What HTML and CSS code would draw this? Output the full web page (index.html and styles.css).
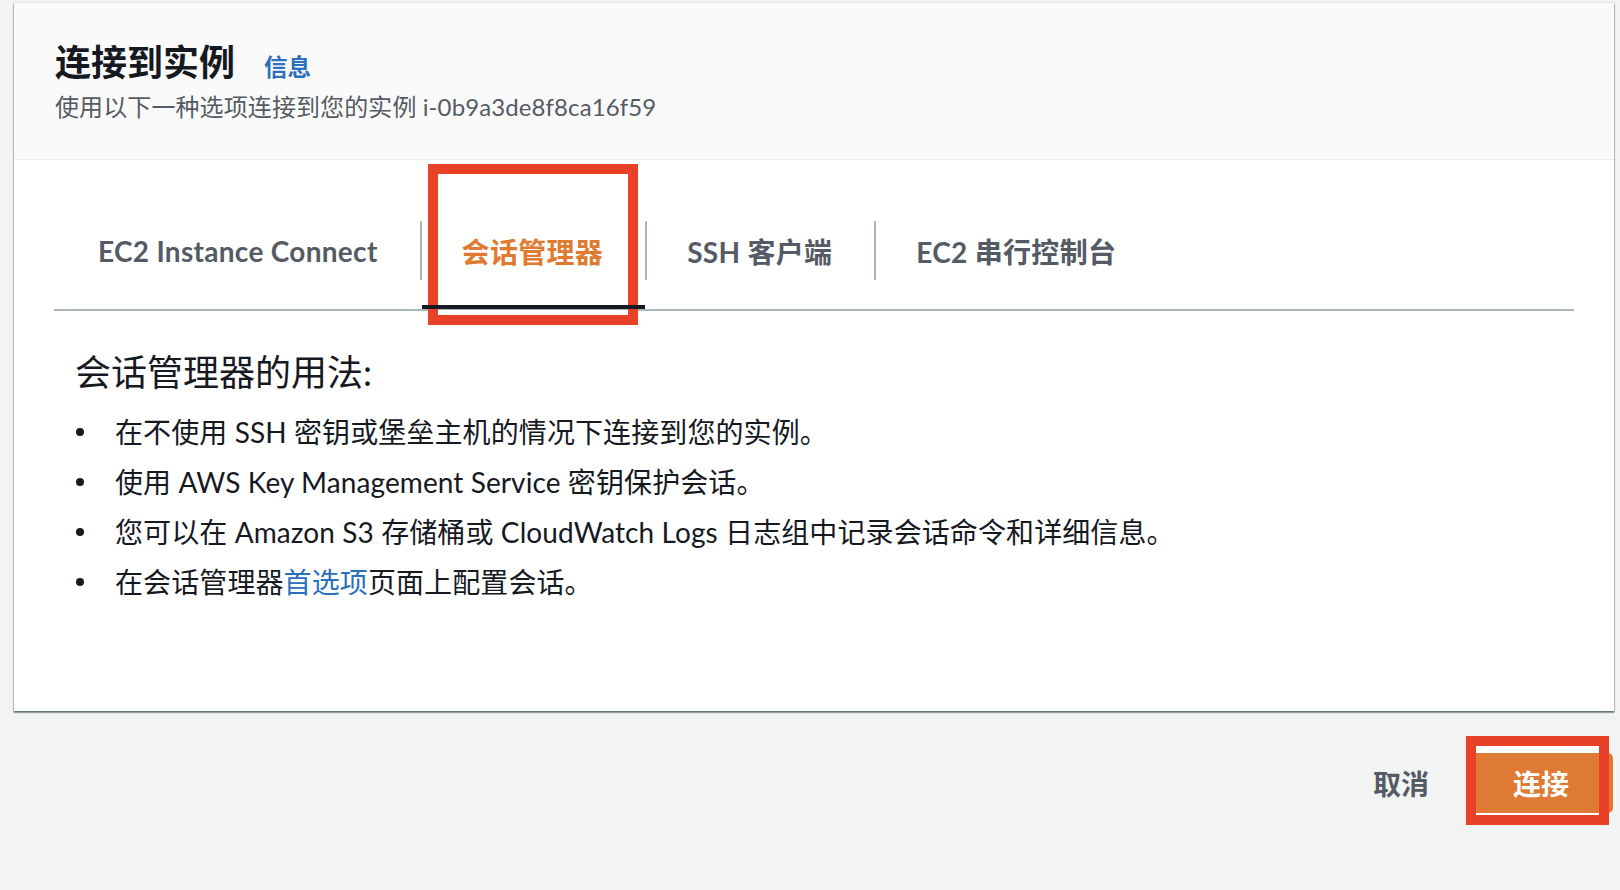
FILE: index.html
```html
<!DOCTYPE html>
<html lang="zh-CN">
<head>
<meta charset="utf-8">
<title>连接到实例</title>
<link rel="stylesheet" href="styles.css">
</head>
<body>
<div class="modal">
  <div class="modal-header">
    <h2 class="title"><span class="title-text">连接到实例</span><a class="info" href="#">信息</a></h2>
    <p class="subtitle">使用以下一种选项连接到您的实例 i-0b9a3de8f8ca16f59</p>
  </div>
  <div class="modal-body">
    <div class="tabs">
      <div class="tab">EC2 Instance Connect</div>
      <div class="tab active">会话管理器<span class="mark mark-tab"></span></div>
      <div class="tab">SSH 客户端</div>
      <div class="tab">EC2 串行控制台</div>
    </div>
    <div class="content">
      <h3 class="usage-title">会话管理器的用法:</h3>
      <ul class="usage-list">
        <li><span>在不使用 SSH 密钥或堡垒主机的情况下连接到您的实例。</span></li>
        <li><span>使用 AWS Key Management Service 密钥保护会话。</span></li>
        <li><span>您可以在 Amazon S3 存储桶或 CloudWatch Logs 日志组中记录会话命令和详细信息。</span></li>
        <li><span>在会话管理器<a class="link" href="#">首选项</a>页面上配置会话。</span></li>
      </ul>
    </div>
  </div>
</div>
<div class="footer">
  <button class="btn btn-cancel">取消</button>
  <button class="btn btn-primary">连接<span class="mark mark-btn"></span></button>
</div>
</body>
</html>
```

FILE: styles.css
```css
* {
  box-sizing: border-box;
}

html, body {
  margin: 0;
  padding: 0;
}

body {
  background: #f2f3f3;
  font-family: "Lato", "Noto Sans CJK SC", sans-serif;
  color: #16191f;
  width: 1620px;
  height: 890px;
  overflow: hidden;
}

.modal {
  margin: 3px 0 0 14px;
  width: 1600px;
  background: #ffffff;
  box-shadow: 0 2px 1px 0 rgba(0, 28, 36, 0.35),
              1px 1px 1px 0 rgba(0, 28, 36, 0.2),
              -1px 1px 1px 0 rgba(0, 28, 36, 0.2),
              0 -1px 1px 0 rgba(0, 28, 36, 0.06);
}

.modal-header {
  height: 157px;
  background: #fafafa;
  border-bottom: 1px solid #eaeded;
  padding: 37px 41px 0;
}

.title {
  display: flex;
  align-items: baseline;
  height: 44px;
  margin: 0;
  font-size: 36px;
  line-height: 44px;
  font-weight: 700;
  color: #16191f;
}

.info {
  margin-left: 29px;
  font-size: 23.5px;
  line-height: 30px;
  font-weight: 700;
  color: #2a70bc;
  text-decoration: none;
}

.subtitle {
  margin: 7px 0 0;
  font-size: 24px;
  line-height: 32px;
  letter-spacing: 0.1px;
  color: #545b64;
}

.tabs {
  display: flex;
  margin: 37px 40px 0;
  border-bottom: 2px solid #aab7b8;
}

.tab {
  position: relative;
  display: flex;
  align-items: center;
  height: 112px;
  padding: 0 42px 4px;
  font-size: 28px;
  font-weight: 700;
  letter-spacing: 0.3px;
  color: #545b64;
  white-space: nowrap;
}

.tab:first-child {
  padding-left: 44px;
}

.tab + .tab::before {
  content: "";
  position: absolute;
  left: 0;
  top: 24px;
  width: 2px;
  height: 59px;
  background: #aab7b8;
}

.tab.active {
  color: #e07a30;
}

.tab.active::after {
  content: "";
  position: absolute;
  left: 2px;
  right: 0;
  bottom: 0;
  height: 4px;
  background: #16191f;
}

.mark {
  position: absolute;
  border: 10px solid #e84128;
  pointer-events: none;
}

.mark-tab {
  left: 8px;
  top: -33px;
  width: 210px;
  height: 161px;
  box-shadow: inset 0 -5px 0 #ffffff;
}

.content {
  padding: 37px 0 104px 61px;
}

.usage-title {
  margin: 0;
  font-size: 36px;
  line-height: 48px;
  font-weight: 400;
  color: #16191f;
}

.usage-list {
  list-style: none;
  margin: 11px 0 0;
  padding: 0;
}

.usage-list li {
  display: flex;
  align-items: center;
  font-size: 28px;
  line-height: 50px;
  letter-spacing: 0.1px;
  color: #16191f;
}

.usage-list li::before {
  content: "";
  flex-shrink: 0;
  width: 8px;
  height: 8px;
  border-radius: 50%;
  background: #16191f;
  margin: 0 31px 0 1px;
}

.link {
  color: #2a70bc;
  text-decoration: none;
}

.footer {
  display: flex;
  justify-content: flex-end;
  margin: 42px 0 0 14px;
  width: 1599px;
}

.btn {
  height: 60px;
  border: none;
  font-family: "Lato", "Noto Sans CJK SC", sans-serif;
  font-size: 28px;
  font-weight: 700;
  cursor: pointer;
}

.btn-cancel {
  padding: 0 40px;
  background: transparent;
  color: #545b64;
}

.btn-primary {
  position: relative;
  padding: 0 44px;
  background: #de7a33;
  color: #ffffff;
  border-radius: 5px;
}

.mark-btn {
  left: -3px;
  top: -17px;
  width: 143px;
  height: 89px;
  box-shadow: inset 0 7px 0 #ffffff, inset 0 -2px 0 #ffffff;
}
```
